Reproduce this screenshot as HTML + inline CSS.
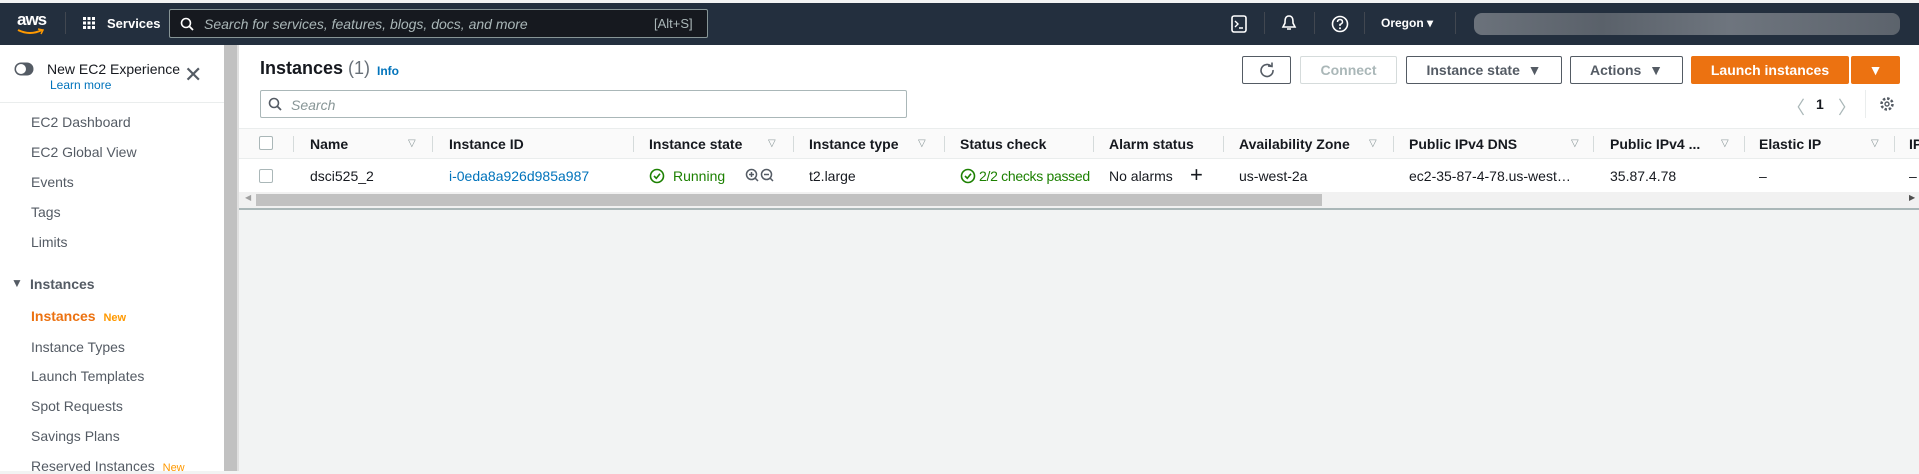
<!DOCTYPE html>
<html><head><meta charset="utf-8"><style>
*{box-sizing:border-box;margin:0;padding:0}
body{width:1919px;height:471px;overflow:hidden;background:#f2f3f3;font-family:"Liberation Sans",sans-serif;font-size:14px;color:#16191f;position:relative}
.a{position:absolute;white-space:nowrap}
.top{position:absolute;left:0;top:3px;width:1919px;height:42px;background:#232f3e}
.w{color:#fff}
.side{position:absolute;left:0;top:45px;width:224px;height:426px;background:#fff}
.sb{position:absolute;left:224px;top:45px;width:13px;height:426px;background:#c1c1c1}
.sb2{position:absolute;left:237px;top:45px;width:2px;height:426px;background:#e0e0e0}
.nav{position:absolute;left:31px;color:#545b64;font-size:14px;white-space:nowrap}
.btn{position:absolute;top:56px;height:28px;border:1px solid #545b64;background:#fff;border-radius:2px;font-weight:bold;color:#545b64;font-size:14px;text-align:center;line-height:26px;white-space:nowrap}
.th{position:absolute;top:136px;font-weight:bold;font-size:14px;white-space:nowrap}
.sep{position:absolute;top:136px;width:1px;height:16px;background:#d5dbdb}
.fi{position:absolute;top:138px;color:#879596;font-size:10px}
.td{position:absolute;top:168px;font-size:14px;white-space:nowrap}
</style></head><body>
<div class="top"></div>
<div class="a w" style="left:17px;top:10px;font-size:17px;font-weight:bold;letter-spacing:-1px">aws</div>
<svg class="a" style="left:17px;top:28px" width="28" height="8"><path d="M1 2 Q13 8 25 2" stroke="#ff9900" stroke-width="2" fill="none"/><path d="M21 1 L26 2 L24 6" stroke="#ff9900" stroke-width="1.5" fill="none"/></svg>
<div class="a" style="left:65px;top:12px;width:1px;height:22px;background:#414750"></div>
<svg class="a" style="left:83px;top:17px" width="12" height="12" fill="#fff"><rect x="0" y="0" width="3" height="3"/><rect x="4.5" y="0" width="3" height="3"/><rect x="9" y="0" width="3" height="3"/><rect x="0" y="4.5" width="3" height="3"/><rect x="4.5" y="4.5" width="3" height="3"/><rect x="9" y="4.5" width="3" height="3"/><rect x="0" y="9" width="3" height="3"/><rect x="4.5" y="9" width="3" height="3"/><rect x="9" y="9" width="3" height="3"/></svg>
<div class="a w" style="left:107px;top:16px;font-size:13px;font-weight:bold">Services</div>
<div class="a" style="left:169px;top:9px;width:539px;height:29px;border:1px solid #879596;background:#16191f;border-radius:2px"></div>
<svg class="a" style="left:180px;top:17px" width="14" height="14"><circle cx="6" cy="6" r="4.5" stroke="#fff" stroke-width="1.6" fill="none"/><path d="M9.5 9.5 L13 13" stroke="#fff" stroke-width="1.8"/></svg>
<div class="a" style="left:204px;top:16px;color:#aab7b8;font-style:italic;font-size:14px">Search for services, features, blogs, docs, and more</div>
<div class="a" style="left:654px;top:16px;color:#aab7b8;font-size:13px">[Alt+S]</div>
<svg class="a" style="left:1231px;top:15px" width="16" height="18"><rect x="1" y="1" width="14" height="16" rx="2" stroke="#fff" stroke-width="1.6" fill="none"/><path d="M4 6 L7 9 L4 12 M8 13 H12" stroke="#fff" stroke-width="1.4" fill="none"/></svg>
<div class="a" style="left:1264px;top:12px;width:1px;height:22px;background:#414750"></div>
<svg class="a" style="left:1281px;top:14px" width="16" height="18"><path d="M8 2 C4 2 4 6 4 9 L2 13 H14 L12 9 C12 6 12 2 8 2 Z M6 15 H10" stroke="#fff" stroke-width="1.6" fill="none"/></svg>
<div class="a" style="left:1314px;top:12px;width:1px;height:22px;background:#414750"></div>
<svg class="a" style="left:1331px;top:15px" width="18" height="18"><circle cx="9" cy="9" r="7.5" stroke="#fff" stroke-width="1.6" fill="none"/><path d="M6.5 7 Q6.5 4.5 9 4.5 Q11.5 4.5 11.5 7 Q11.5 8.5 9 9.5 V11" stroke="#fff" stroke-width="1.5" fill="none"/><circle cx="9" cy="13.3" r="1" fill="#fff"/></svg>
<div class="a" style="left:1364px;top:12px;width:1px;height:22px;background:#414750"></div>
<div class="a w" style="left:1381px;top:16px;font-size:12px;font-weight:bold">Oregon ▾</div>
<div class="a" style="left:1455px;top:12px;width:1px;height:22px;background:#414750"></div>
<div class="a" style="left:1474px;top:13px;width:426px;height:22px;background:linear-gradient(90deg,#6b727b,#5a616a 30%,#6e757e 60%,#5c636c);border-radius:8px"></div>

<div class="side"></div>
<div class="sb"></div><div class="sb2"></div>
<svg class="a" style="left:14px;top:62px" width="20" height="14"><rect x="0.5" y="0.5" width="19" height="13" rx="6.5" fill="#545b64"/><circle cx="7" cy="7" r="5" fill="#fff"/></svg>
<div class="a" style="left:47px;top:61px;font-size:14px">New EC2 Experience</div>
<div class="a" style="left:50px;top:78px;font-size:12px;color:#0073bb">Learn more</div>
<div class="a" style="left:184px;top:62px;font-size:22px;color:#545b64;font-weight:300">✕</div>
<div class="a" style="left:0;top:102px;width:224px;height:1px;background:#eaeded"></div>
<div class="nav" style="top:114px">EC2 Dashboard</div>
<div class="nav" style="top:144px">EC2 Global View</div>
<div class="nav" style="top:174px">Events</div>
<div class="nav" style="top:204px">Tags</div>
<div class="nav" style="top:234px">Limits</div>
<div class="a" style="left:11px;top:276px;font-size:12px;color:#545b64">▼</div>
<div class="a" style="left:30px;top:276px;font-weight:bold;color:#545b64">Instances</div>
<div class="nav" style="top:308px;color:#ec7211;font-weight:bold">Instances <span style="font-size:11px;color:#ff9900;margin-left:4px">New</span></div>
<div class="nav" style="top:339px">Instance Types</div>
<div class="nav" style="top:368px">Launch Templates</div>
<div class="nav" style="top:398px">Spot Requests</div>
<div class="nav" style="top:428px">Savings Plans</div>
<div class="nav" style="top:458px">Reserved Instances <span style="font-size:11px;color:#ff9900;margin-left:4px">New</span></div>

<div class="a" style="left:239px;top:45px;width:1680px;height:164px;background:#fff"></div>
<div class="a" style="left:260px;top:58px;font-size:18px;font-weight:bold">Instances <span style="font-weight:normal;color:#687078">(1)</span></div>
<div class="a" style="left:377px;top:64px;font-size:12px;font-weight:bold;color:#0073bb">Info</div>
<div class="a" style="left:260px;top:90px;width:647px;height:28px;border:1px solid #aab7b8;border-radius:2px;background:#fff"></div>
<svg class="a" style="left:268px;top:97px" width="14" height="14"><circle cx="6" cy="6" r="4.5" stroke="#545b64" stroke-width="1.6" fill="none"/><path d="M9.5 9.5 L13 13" stroke="#545b64" stroke-width="1.8"/></svg>
<div class="a" style="left:291px;top:97px;color:#879596;font-style:italic">Search</div>

<div class="btn" style="left:1242px;width:49px"><svg width="18" height="18" style="margin-top:4px"><path d="M13.5 5.5 A6 6 0 1 0 15 9" stroke="#545b64" stroke-width="1.6" fill="none"/><path d="M10 5 L14 5.5 L14 1.5" stroke="#545b64" stroke-width="1.6" fill="none"/></svg></div>
<div class="btn" style="left:1300px;width:97px;border-color:#d5dbdb;color:#aab7b8">Connect</div>
<div class="btn" style="left:1406px;width:156px">Instance state &nbsp;▼</div>
<div class="btn" style="left:1570px;width:113px">Actions &nbsp;▼</div>
<div class="btn" style="left:1691px;width:158px;background:#ec7211;border-color:#ec7211;color:#fff">Launch instances</div>
<div class="btn" style="left:1851px;width:49px;background:#ec7211;border-color:#ec7211;color:#fff">▼</div>
<div class="a" style="left:1787px;top:94px;font-size:18px;color:#aab7b8">〈</div>
<div class="a" style="left:1816px;top:96px;font-size:14px;font-weight:bold">1</div>
<div class="a" style="left:1838px;top:94px;font-size:18px;color:#aab7b8">〉</div>
<div class="a" style="left:1865px;top:90px;width:1px;height:28px;background:#eaeded"></div>
<svg class="a" style="left:1879px;top:96px" width="16" height="16"><circle cx="8" cy="8" r="5.5" stroke="#545b64" stroke-width="2.5" fill="none" stroke-dasharray="2.5 1.8"/><circle cx="8" cy="8" r="2" stroke="#545b64" stroke-width="1.4" fill="none"/></svg>

<div class="a" style="left:239px;top:128px;width:1680px;height:31px;background:#fafafa;border-top:1px solid #eaeded;border-bottom:1px solid #eaeded"></div>
<div class="a" style="left:259px;top:136px;width:14px;height:14px;border:1px solid #aab7b8;border-radius:2px;background:#fff"></div>
<div class="sep" style="left:293px"></div>
<div class="th" style="left:310px">Name</div><div class="fi" style="left:408px">▽</div>
<div class="sep" style="left:432px"></div>
<div class="th" style="left:449px">Instance ID</div>
<div class="sep" style="left:633px"></div>
<div class="th" style="left:649px">Instance state</div><div class="fi" style="left:768px">▽</div>
<div class="sep" style="left:793px"></div>
<div class="th" style="left:809px">Instance type</div><div class="fi" style="left:918px">▽</div>
<div class="sep" style="left:944px"></div>
<div class="th" style="left:960px">Status check</div>
<div class="sep" style="left:1093px"></div>
<div class="th" style="left:1109px">Alarm status</div>
<div class="sep" style="left:1223px"></div>
<div class="th" style="left:1239px">Availability Zone</div><div class="fi" style="left:1369px">▽</div>
<div class="sep" style="left:1393px"></div>
<div class="th" style="left:1409px">Public IPv4 DNS</div><div class="fi" style="left:1571px">▽</div>
<div class="sep" style="left:1593px"></div>
<div class="th" style="left:1610px">Public IPv4 ...</div><div class="fi" style="left:1721px">▽</div>
<div class="sep" style="left:1744px"></div>
<div class="th" style="left:1759px">Elastic IP</div><div class="fi" style="left:1871px">▽</div>
<div class="sep" style="left:1894px"></div>
<div class="th" style="left:1909px">IP</div>

<div class="a" style="left:259px;top:169px;width:14px;height:14px;border:1px solid #aab7b8;border-radius:2px;background:#fff"></div>
<div class="td" style="left:310px">dsci525_2</div>
<div class="td" style="left:449px;color:#0073bb">i-0eda8a926d985a987</div>
<svg class="a" style="left:649px;top:168px" width="16" height="16"><circle cx="8" cy="8" r="6.5" stroke="#1d8102" stroke-width="1.6" fill="none"/><path d="M5 8 L7.3 10.3 L11 5.8" stroke="#1d8102" stroke-width="1.6" fill="none"/></svg>
<div class="td" style="left:673px;color:#1d8102">Running</div>
<svg class="a" style="left:745px;top:168px" width="34" height="16"><circle cx="6.5" cy="6.5" r="5" stroke="#545b64" stroke-width="1.5" fill="none"/><path d="M10 10 L13 13 M4 6.5 H9 M6.5 4 V9" stroke="#545b64" stroke-width="1.5"/><circle cx="21.5" cy="6.5" r="5" stroke="#545b64" stroke-width="1.5" fill="none"/><path d="M25 10 L28 13 M19 6.5 H24" stroke="#545b64" stroke-width="1.5"/></svg>
<div class="td" style="left:809px">t2.large</div>
<svg class="a" style="left:960px;top:168px" width="16" height="16"><circle cx="8" cy="8" r="6.5" stroke="#1d8102" stroke-width="1.6" fill="none"/><path d="M5 8 L7.3 10.3 L11 5.8" stroke="#1d8102" stroke-width="1.6" fill="none"/></svg>
<div class="td" style="left:979px;color:#1d8102;width:114px;overflow:hidden;letter-spacing:-0.3px">2/2 checks passed</div>
<div class="td" style="left:1109px">No alarms</div>
<div class="a" style="left:1190px;top:162px;font-size:22px">+</div>
<div class="td" style="left:1239px">us-west-2a</div>
<div class="td" style="left:1409px">ec2-35-87-4-78.us-west…</div>
<div class="td" style="left:1610px">35.87.4.78</div>
<div class="td" style="left:1759px">–</div>
<div class="td" style="left:1909px">–</div>

<div class="a" style="left:239px;top:192px;width:1680px;height:16px;background:#f1f1f1"></div>
<div class="a" style="left:256px;top:194px;width:1066px;height:12px;background:#c1c1c1"></div>
<div class="a" style="left:245px;top:193px;font-size:8px;color:#a0a0a0">◀</div>
<div class="a" style="left:1909px;top:193px;font-size:8px;color:#505050">▶</div>
<div class="a" style="left:239px;top:208px;width:1680px;height:2px;background:#aab7b8"></div>
</body></html>
